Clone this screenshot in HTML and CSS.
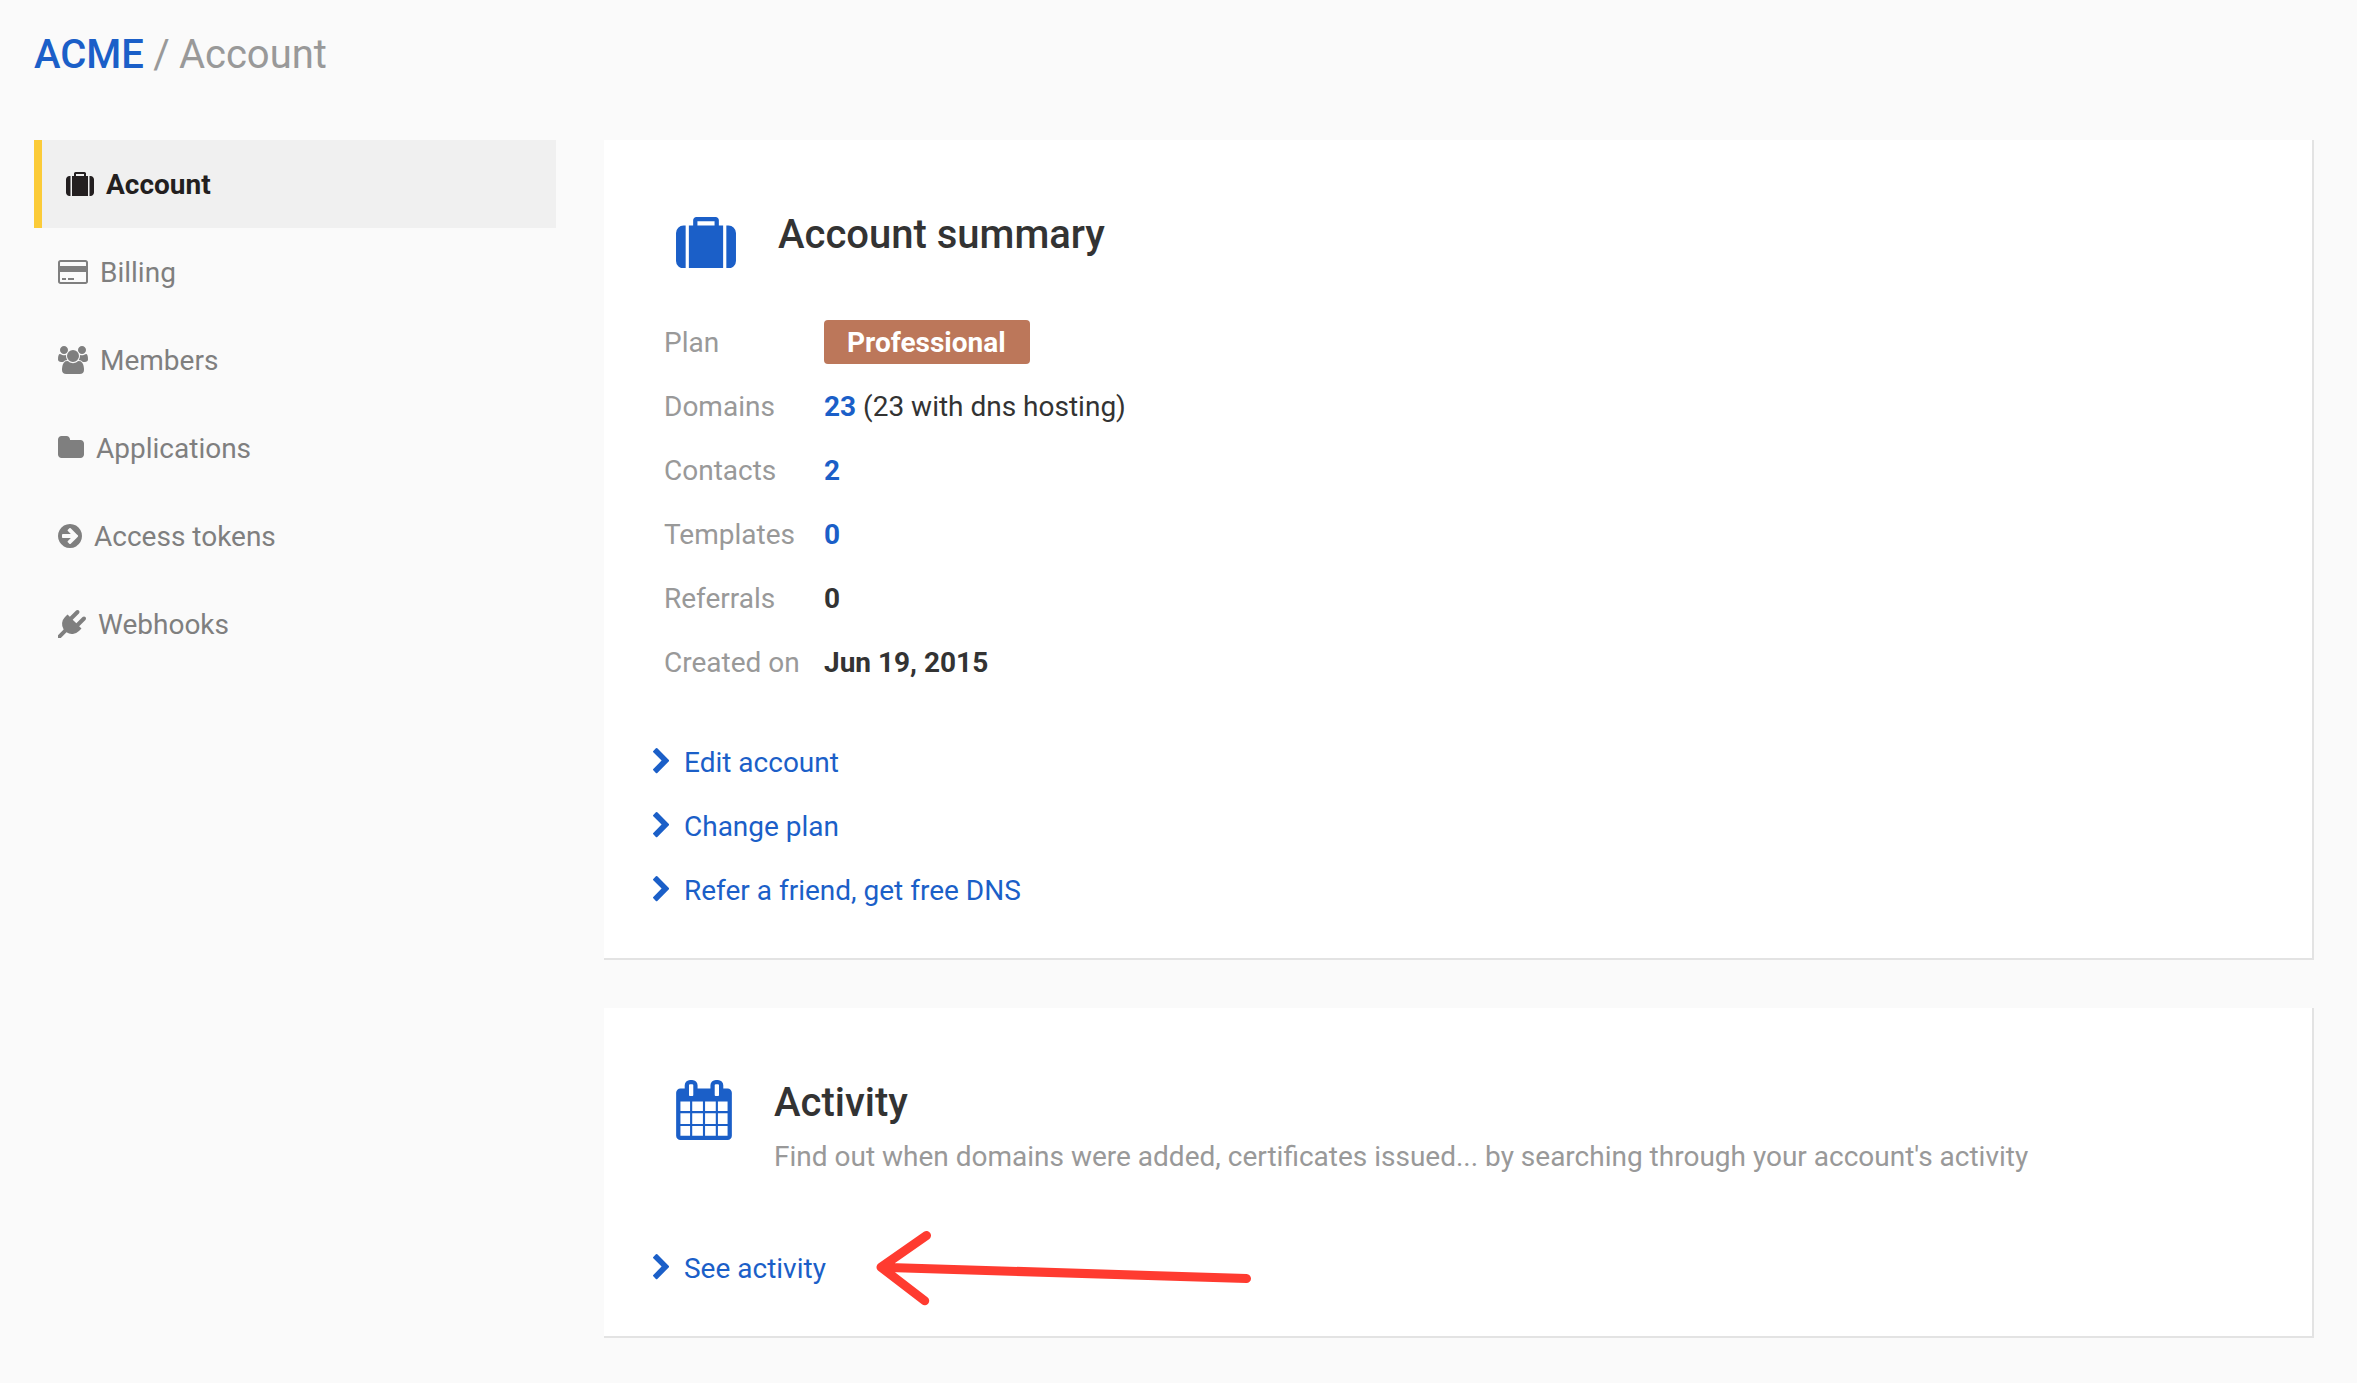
FILE: index.html
```html
<!DOCTYPE html>
<html lang="en">
<head>
<meta charset="utf-8">
<title>ACME / Account</title>
<link rel="stylesheet" href="styles.css">
</head>
<body>
<header class="breadcrumb"><a class="breadcrumb-home" href="#">ACME</a> / Account</header>
<div class="layout">
  <nav class="sidebar">
    <a class="nav-item nav-item-active" href="#">
      <svg width="28" height="24" viewBox="0 0 1792 1536"><path d="M640 256h512V128H640v128zM288 256v1280h-64q-92 0-158-66T0 1312V480q0-92 66-158t158-66h64zm1120 0v1280H384V256h128V96q0-40 28-68t68-28h576q40 0 68 28t28 68v160h128zm384 224v832q0 92-66 158t-158 66h-64V256h64q92 0 158 66t66 158z"/></svg>
      <span>Account</span>
    </a>
    <a class="nav-item" href="#">
      <svg width="30" height="24" viewBox="0 128 1920 1536"><path d="M1760 128q66 0 113 47t47 113v1216q0 66-47 113t-113 47H160q-66 0-113-47T0 1504V288q0-66 47-113t113-47h1600zM160 256q-13 0-22.500 9.500T128 288v224h1664V288q0-13-9.500-22.500T1760 256H160zm1600 1280q13 0 22.500-9.500t9.500-22.500V896H128v608q0 13 9.500 22.500t22.500 9.500h1600zM256 1408v-128h256v128H256zm384 0v-128h384v128H640z"/></svg>
      <span>Billing</span>
    </a>
    <a class="nav-item" href="#">
      <svg width="30" height="28" viewBox="0 0 1920 1792"><path d="M593 896q-162 5-265 128H194q-82 0-138-40.500T0 865q0-353 124-353 6 0 43.500 21t97.500 42.500T384 597q67 0 133-23-5 37-5 66 0 139 81 256zm1071 637q0 120-73 189.500t-194 69.500H523q-121 0-194-69.500T256 1533q0-53 3.500-103.500t14-109T300 1212t43-97.500 62-81 85.500-53.500T602 960q10 0 43 21.500t73 48 107 48 135 21.500 135-21.500 107-48 73-48 43-21.500q61 0 111.500 20t85.500 53.500 62 81 43 97.500 26.500 108.500 14 109 3.500 103.500zM640 256q0 106-75 181t-181 75-181-75-75-181 75-181T384 0t181 75 75 181zm704 384q0 159-112.500 271.500T960 1024 688.500 911.500 576 640t112.500-271.500T960 256t271.500 112.500T1344 640zm576 225q0 78-56 118.500t-138 40.500h-134q-103-123-265-128 81-117 81-256 0-29-5-66 66 23 133 23 59 0 119-21.500t97.500-42.500 43.500-21q124 0 124 353zm-128-609q0 106-75 181t-181 75-181-75-75-181 75-181 181-75 181 75 75 181z"/></svg>
      <span>Members</span>
    </a>
    <a class="nav-item" href="#">
      <svg class="icon-folder" width="26" height="22" viewBox="0 0 1664 1408"><path d="M1664 480v704q0 92-66 158t-158 66H224q-92 0-158-66T0 1184V224q0-92 66-158T224 0h320q92 0 158 66t66 158v32h672q92 0 158 66t66 158z"/></svg>
      <span>Applications</span>
    </a>
    <a class="nav-item" href="#">
      <svg width="24" height="24" viewBox="128 128 1536 1536"><path d="M1413 896q0-27-18-45l-91-91-362-362q-18-18-45-18t-45 18l-91 91q-18 18-18 45t18 45l189 189h-502q-26 0-45 19t-19 45v128q0 26 19 45t45 19h502l-189 189q-19 19-19 45t19 45l91 91q18 18 45 18t45-18l362-362 91-91q18-18 18-45zm251 0q0 209-103 385.500t-279.500 279.500-385.500 103-385.500-103-279.500-279.500-103-385.500 103-385.500 279.500-279.500 385.500-103 385.500 103 279.500 279.500 103 385.500z"/></svg>
      <span>Access tokens</span>
    </a>
    <a class="nav-item" href="#">
      <svg width="28" height="28" viewBox="0 0 1792 1792"><path d="M1755 453q37 38 37 90.500t-37 90.500l-401 400 150 150-160 160q-163 163-389.500 186.500t-411.500-100.500l-362 362h-181v-181l362-362q-124-185-100.500-411.500t186.500-389.500l160-160 150 150 400-401q38-37 91-37t90 37 37 90.500-37 90.500l-400 401 234 234 401-400q38-37 91-37t90 37z"/></svg>
      <span>Webhooks</span>
    </a>
  </nav>
  <main class="content">
    <section class="card card-summary">
      <div class="card-head">
        <svg class="card-icon" width="60" height="51.4" viewBox="0 0 1792 1536"><path d="M640 256h512V128H640v128zM288 256v1280h-64q-92 0-158-66T0 1312V480q0-92 66-158t158-66h64zm1120 0v1280H384V256h128V96q0-40 28-68t68-28h576q40 0 68 28t28 68v160h128zm384 224v832q0 92-66 158t-158 66h-64V256h64q92 0 158 66t66 158z"/></svg>
        <h2>Account summary</h2>
      </div>
      <dl class="facts">
        <dt>Plan</dt><dd><span class="badge">Professional</span></dd>
        <dt>Domains</dt><dd><a href="#">23</a> (23 with dns hosting)</dd>
        <dt>Contacts</dt><dd><a href="#">2</a></dd>
        <dt>Templates</dt><dd><a href="#">0</a></dd>
        <dt>Referrals</dt><dd><strong>0</strong></dd>
        <dt>Created on</dt><dd><strong>Jun 19, 2015</strong></dd>
      </dl>
      <ul class="links">
        <li><svg width="16.200" height="25.200" viewBox="346 90 1036 1612"><path d="M1363 941l-742 742q-19 19-45 19t-45-19l-166-166q-19-19-19-45t19-45l531-531-531-531q-19-19-19-45t19-45l166-166q19-19 45-19t45 19l742 742q19 19 19 45t-19 45z"/></svg><a href="#">Edit account</a></li>
        <li><svg width="16.200" height="25.200" viewBox="346 90 1036 1612"><path d="M1363 941l-742 742q-19 19-45 19t-45-19l-166-166q-19-19-19-45t19-45l531-531-531-531q-19-19-19-45t19-45l166-166q19-19 45-19t45 19l742 742q19 19 19 45t-19 45z"/></svg><a href="#">Change plan</a></li>
        <li><svg width="16.200" height="25.200" viewBox="346 90 1036 1612"><path d="M1363 941l-742 742q-19 19-45 19t-45-19l-166-166q-19-19-19-45t19-45l531-531-531-531q-19-19-19-45t19-45l166-166q19-19 45-19t45 19l742 742q19 19 19 45t-19 45z"/></svg><a href="#">Refer a friend, get free DNS</a></li>
      </ul>
    </section>
    <section class="card card-activity">
      <div class="card-head">
        <svg class="card-icon" width="56" height="60" viewBox="64 0 1664 1792"><path d="M192 1664h288v-288h-288v288zm352 0h320v-288h-320v288zm-352-352h288v-320h-288v320zm352 0h320v-320h-320v320zm-352-384h288v-288h-288v288zm736 736h320v-288h-320v288zm-384-736h320v-288h-320v288zm768 736h288v-288h-288v288zm-384-352h320v-320h-320v320zm-352-864v-288q0-13-9.500-22.500t-22.500-9.500h-64q-13 0-22.500 9.500t-9.500 22.500v288q0 13 9.500 22.500t22.500 9.500h64q13 0 22.500-9.500t9.500-22.500zm736 864h288v-320h-288v320zm-384-384h320v-288h-320v288zm384 0h288v-288h-288v288zm32-480v-288q0-13-9.500-22.500t-22.500-9.500h-64q-13 0-22.500 9.500t-9.500 22.500v288q0 13 9.500 22.500t22.500 9.500h64q13 0 22.500-9.500t9.500-22.500zm384-64v1280q0 52-38 90t-90 38h-1408q-52 0-90-38t-38-90v-1280q0-52 38-90t90-38h128v-96q0-66 47-113t113-47h64q66 0 113 47t47 113v96h384v-96q0-66 47-113t113-47h64q66 0 113 47t47 113v96h128q52 0 90 38t38 90z"/></svg>
        <div>
          <h2>Activity</h2>
          <p>Find out when domains were added, certificates issued... by searching through your account's activity</p>
        </div>
      </div>
      <ul class="links">
        <li><svg width="16.200" height="25.200" viewBox="346 90 1036 1612"><path d="M1363 941l-742 742q-19 19-45 19t-45-19l-166-166q-19-19-19-45t19-45l531-531-531-531q-19-19-19-45t19-45l166-166q19-19 45-19t45 19l742 742q19 19 19 45t-19 45z"/></svg><a href="#">See activity</a></li>
      </ul>
      <svg class="pointer" width="380" height="80" viewBox="0 0 380 80"><path d="M55.500 8.500L10 40.200L53.700 73.800M10 40.200L375.500 51.500"/></svg>
    </section>
  </main>
</div>
</body>
</html>
```

FILE: styles.css
```css
* { box-sizing: border-box; }

body {
  margin: 0;
  min-height: 1383px;
  padding: 31px 43px 0 34px;
  background: #fafafa;
  color: #333;
  font: 28px/40px Roboto, sans-serif;
}

a { color: #1b5fc8; text-decoration: none; }
svg { display: block; flex: none; fill: currentColor; }
h2, p, dl, dd, ul { margin: 0; padding: 0; }

.breadcrumb {
  height: 109px;
  color: #999;
  font-size: 40px;
  line-height: 48px;
  word-spacing: -0.7px;
}
.breadcrumb-home { font-weight: 500; }

.layout { display: flex; gap: 48px; align-items: flex-start; }

.sidebar { width: 522px; flex: none; }
.nav-item {
  display: flex;
  align-items: center;
  gap: 12px;
  height: 88px;
  padding-left: 24px;
  color: #7f7f7f;
}
.nav-item span { padding-top: 2px; }
.nav-item-active {
  border-left: 8px solid #fbcb38;
  background: #f0f0f0;
  color: #231f20;
  font-weight: 700;
}
.icon-folder { margin-bottom: 2px; }

.content { flex: 1; display: flex; flex-direction: column; gap: 48px; }
.card {
  position: relative;
  background: #fff;
  border: solid #e3e3e3;
  border-width: 0 2px 2px 0;
}
.card-summary { height: 820px; padding: 70px 46px 0; }
.card-activity { height: 330px; padding: 70px 46px 0; }

.card-head { display: flex; gap: 42px; padding-left: 26px; }
.card-icon { margin-top: 7px; color: #1b5fc8; }
.card-activity .card-icon { margin-top: 2px; }
.card h2 { font-size: 40px; line-height: 50px; font-weight: 500; }
.card p { margin-top: 9px; color: #999; }

.facts {
  display: grid;
  grid-template-columns: 160px 1fr;
  grid-auto-rows: 64px;
  align-items: center;
  margin: 42px 0 36px 14px;
}
.card-summary .card-head { height: 59px; }
.facts dt { color: #999; }
.facts a, .facts strong { font-weight: 700; }
.badge {
  display: block;
  width: 206px;
  margin-bottom: 2px;
  padding: 3px 0 1px 23px;
  border-radius: 4px;
  background: #bc775a;
  color: #fff;
  font-weight: 700;
}

.links { list-style: none; }
.links li { display: flex; align-items: center; gap: 14.500px; height: 64px; }
.links svg { margin: 0 0 4px 3.300px; color: #1b5fc8; }
.card-activity .links { margin-top: 60px; }

/* Hand-drawn arrow lying over the card */
.pointer {
  position: absolute;
  left: 267px;
  top: 219px;
  fill: none;
  stroke: #ff3b30;
  stroke-width: 9;
  stroke-linecap: round;
  stroke-linejoin: round;
}
```
